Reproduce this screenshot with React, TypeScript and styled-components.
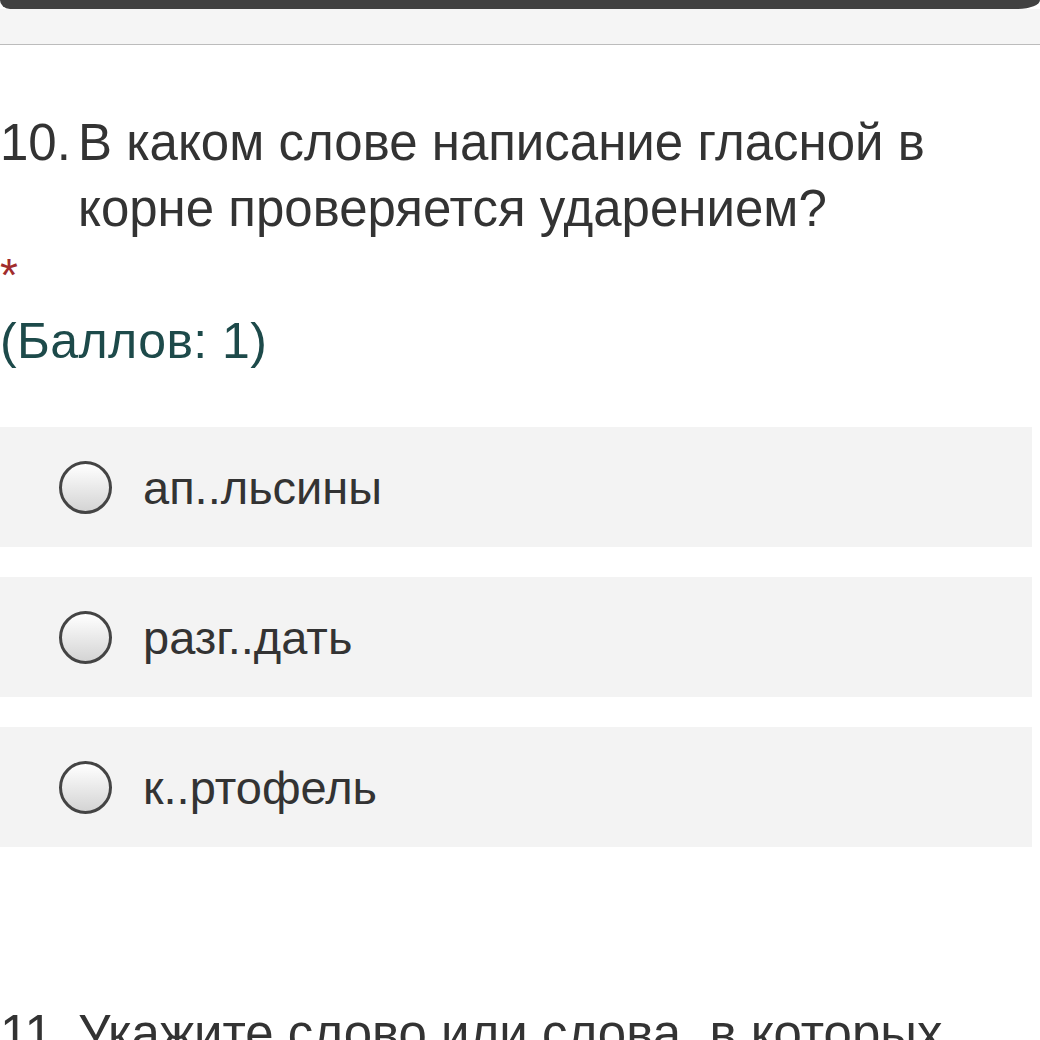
import { createGlobalStyle, styled } from "styled-components";

const GlobalStyle = createGlobalStyle`
  html, body {
    margin: 0;
    padding: 0;
    background: #fff;
  }
  body {
    font-family: "Liberation Sans", Arial, sans-serif;
    color: #333;
    overflow: hidden;
  }
`

const Page = styled.div`
  width: 1040px;
  height: 1040px;
  overflow: hidden;
`

const TopBar = styled.div`
  height: 9px;
  background-color: #414141;
  border-radius: 0 0 22px 10px / 0 0 9px 9px;
`

const SubBar = styled.div`
  height: 35px;
  background-color: #f5f5f5;
  border-bottom: 1px solid #bcbcbc;
`

const Question = styled.section`
  margin-top: 65px;
`

const Title = styled.div`
  display: flex;
  font-size: 51px;
  line-height: 66px;
  color: #333;
`

const Num = styled.span`
  flex-shrink: 0;
  width: 78px;
`

const TitleText = styled.span`
  flex: 1;
`

const Required = styled.div`
  color: #a12c2c;
  font-size: 46px;
  line-height: 50px;
  margin-top: 8px;
`

const Points = styled.div`
  color: #1d4a4a;
  font-size: 50px;
  line-height: 60px;
  letter-spacing: 0.4px;
  margin-top: 11px;
`

const Options = styled.div`
  display: flex;
  flex-direction: column;
  gap: 30px;
  margin-top: 56px;
  width: 1032px;
`

const Option = styled.label`
  display: flex;
  align-items: center;
  height: 120px;
  background-color: #f3f3f3;
  padding-left: 59px;
  box-sizing: border-box;
`

const Radio = styled.span`
  width: 53px;
  height: 53px;
  box-sizing: border-box;
  border: 3px solid #444;
  border-radius: 50%;
  background: linear-gradient(#ffffff, #d4d4d4);
  flex-shrink: 0;
  margin-right: 31px;
`

const OptionText = styled.span`
  font-size: 47px;
  color: #333;
`

const NextTitle = styled(Title)`
  margin-top: 154px;
`

const answers = ["ап..льсины", "разг..дать", "к..ртофель"];

export default function App() {
  return (
    <Page>
      <GlobalStyle />
      <TopBar />
      <SubBar />
      <Question>
        <Title>
          <Num>10.</Num>
          <TitleText>В каком слове написание гласной в корне проверяется ударением?</TitleText>
        </Title>
        <Required>*</Required>
        <Points>(Баллов: 1)</Points>
        <Options>
          {answers.map((a) => (
            <Option key={a}>
              <Radio />
              <OptionText>{a}</OptionText>
            </Option>
          ))}
        </Options>
      </Question>
      <NextTitle>
        <Num>11.</Num>
        <TitleText>Укажите слово или слова, в которых</TitleText>
      </NextTitle>
    </Page>
  );
}
